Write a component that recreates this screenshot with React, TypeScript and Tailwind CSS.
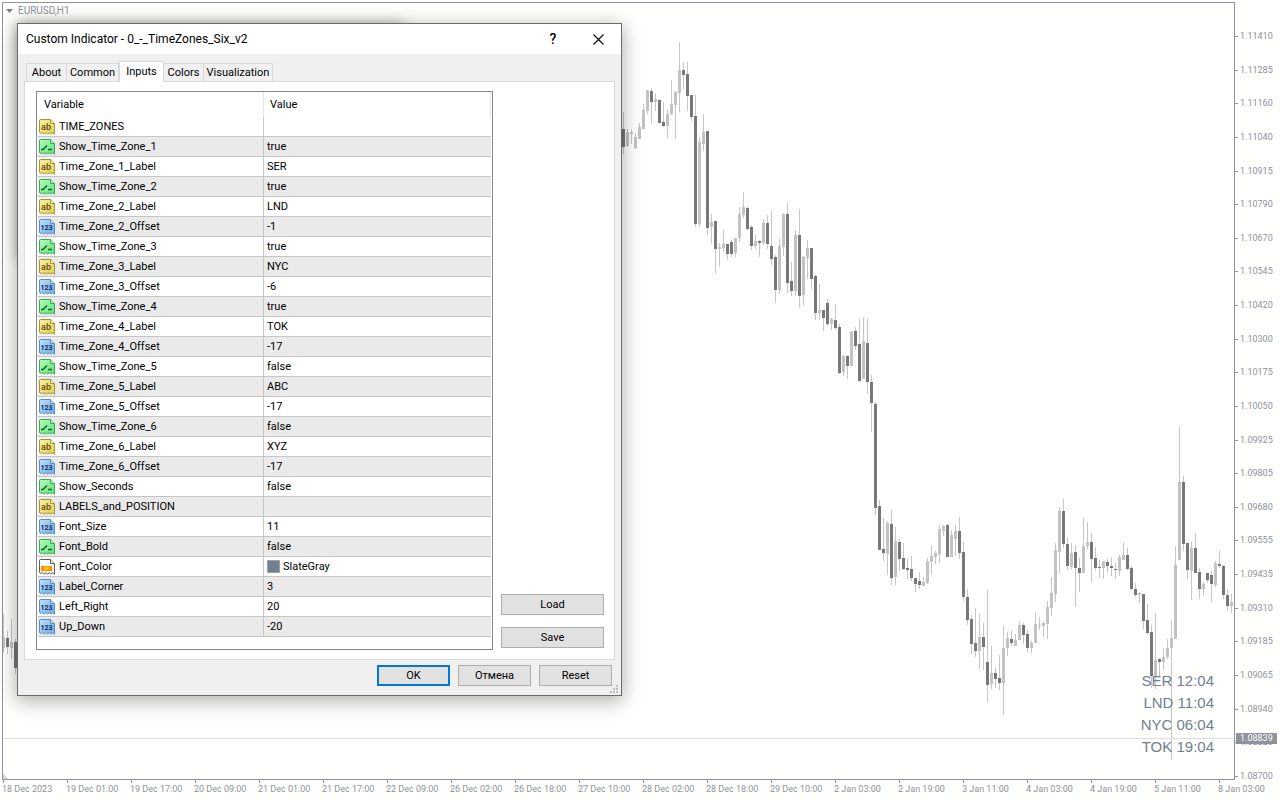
import React from "react";
import { twMerge } from "tailwind-merge";

type Kind = "text" | "bool" | "int" | "color";

const inputs: [Kind, string, string][] = [
  ["text", "TIME_ZONES", ""],
  ["bool", "Show_Time_Zone_1", "true"],
  ["text", "Time_Zone_1_Label", "SER"],
  ["bool", "Show_Time_Zone_2", "true"],
  ["text", "Time_Zone_2_Label", "LND"],
  ["int", "Time_Zone_2_Offset", "-1"],
  ["bool", "Show_Time_Zone_3", "true"],
  ["text", "Time_Zone_3_Label", "NYC"],
  ["int", "Time_Zone_3_Offset", "-6"],
  ["bool", "Show_Time_Zone_4", "true"],
  ["text", "Time_Zone_4_Label", "TOK"],
  ["int", "Time_Zone_4_Offset", "-17"],
  ["bool", "Show_Time_Zone_5", "false"],
  ["text", "Time_Zone_5_Label", "ABC"],
  ["int", "Time_Zone_5_Offset", "-17"],
  ["bool", "Show_Time_Zone_6", "false"],
  ["text", "Time_Zone_6_Label", "XYZ"],
  ["int", "Time_Zone_6_Offset", "-17"],
  ["bool", "Show_Seconds", "false"],
  ["text", "LABELS_and_POSITION", ""],
  ["int", "Font_Size", "11"],
  ["bool", "Font_Bold", "false"],
  ["color", "Font_Color", "SlateGray"],
  ["int", "Label_Corner", "3"],
  ["int", "Left_Right", "20"],
  ["int", "Up_Down", "-20"],
];

const prices = [
  "1.11410", "1.11285", "1.11160", "1.11040", "1.10915", "1.10790", "1.10670", "1.10545",
  "1.10420", "1.10300", "1.10175", "1.10050", "1.09925", "1.09805", "1.09680", "1.09555",
  "1.09435", "1.09310", "1.09185", "1.09065", "1.08940", "1.08820", "1.08700",
];

const times = [
  "18 Dec 2023", "19 Dec 01:00", "19 Dec 17:00", "20 Dec 09:00", "21 Dec 01:00",
  "21 Dec 17:00", "22 Dec 09:00", "26 Dec 02:00", "26 Dec 18:00", "27 Dec 10:00",
  "28 Dec 02:00", "28 Dec 18:00", "29 Dec 10:00", "2 Jan 03:00", "2 Jan 19:00",
  "3 Jan 11:00", "4 Jan 03:00", "4 Jan 19:00", "5 Jan 11:00", "8 Jan 03:00",
];

const clocks = ["SER 12:04", "LND 11:04", "NYC 06:04", "TOK 19:04"];

// high, body top, body bottom, low, 1 = bearish
type Candle = [number, number, number, number, 0 | 1];

const firstCandles: Candle[] = [
  [614, 637, 648, 653, 0], [631, 638, 647, 654, 1], [619, 642, 648, 659, 0], [639, 642, 668, 674, 1],
];

const candles: Candle[] = [
  [112, 129, 147, 154, 1], [129, 132, 146, 147, 0], [129, 132, 134, 144, 0], [133, 137, 148, 149, 0],
  [123, 127, 139, 139, 0], [104, 110, 129, 129, 0], [90, 90, 111, 114, 0], [88, 91, 102, 124, 1],
  [93, 99, 102, 111, 0], [99, 100, 123, 123, 1], [102, 122, 126, 127, 1], [109, 114, 126, 138, 0],
  [80, 104, 114, 115, 0], [91, 92, 105, 139, 0], [42, 70, 93, 112, 0], [62, 70, 75, 89, 1],
  [62, 74, 96, 111, 1], [95, 95, 117, 121, 1], [95, 116, 224, 227, 1], [137, 142, 224, 227, 0],
  [114, 132, 144, 151, 0], [131, 131, 228, 235, 1], [214, 222, 227, 244, 0], [221, 221, 249, 273, 1],
  [243, 247, 249, 267, 0], [230, 244, 248, 252, 0], [244, 244, 254, 260, 1], [240, 242, 254, 257, 1],
  [238, 238, 253, 257, 0], [207, 214, 238, 242, 0], [192, 207, 215, 218, 0], [206, 208, 229, 230, 1],
  [225, 227, 246, 250, 1], [235, 241, 246, 249, 0], [240, 241, 243, 257, 1], [219, 223, 243, 245, 0],
  [215, 223, 244, 249, 1], [211, 246, 259, 265, 1], [255, 257, 290, 303, 1], [239, 246, 290, 294, 0],
  [213, 214, 247, 256, 0], [203, 214, 283, 293, 1], [262, 281, 291, 296, 1], [230, 235, 291, 296, 0],
  [209, 235, 296, 308, 1], [256, 257, 295, 305, 0], [240, 248, 258, 279, 0], [248, 248, 279, 289, 1],
  [275, 276, 313, 320, 1], [284, 310, 313, 319, 0], [310, 310, 318, 331, 1], [299, 303, 324, 326, 1],
  [318, 319, 324, 330, 0], [304, 320, 328, 330, 1], [324, 327, 373, 374, 1], [355, 356, 372, 376, 0],
  [355, 356, 366, 379, 1], [331, 332, 366, 366, 0], [327, 331, 346, 350, 1], [319, 344, 381, 382, 1],
  [317, 341, 379, 379, 0], [319, 343, 382, 394, 1], [375, 382, 403, 432, 1], [402, 404, 508, 515, 1],
  [500, 506, 550, 550, 1], [518, 549, 553, 561, 1], [521, 523, 554, 575, 0], [510, 524, 578, 585, 1],
  [527, 541, 577, 585, 0], [539, 542, 559, 571, 1], [543, 558, 569, 570, 1], [559, 568, 570, 579, 1],
  [556, 569, 578, 581, 1], [578, 578, 584, 592, 1], [572, 581, 585, 589, 1], [577, 582, 586, 586, 0],
  [558, 561, 583, 584, 0], [546, 556, 562, 574, 0], [551, 553, 557, 564, 0], [525, 529, 554, 563, 0],
  [525, 526, 531, 536, 0], [524, 525, 557, 557, 1], [530, 535, 557, 557, 0], [525, 531, 539, 556, 0],
  [517, 531, 553, 559, 1], [542, 552, 597, 601, 1], [589, 597, 620, 625, 1], [615, 619, 644, 654, 1],
  [608, 643, 651, 657, 1], [614, 637, 651, 669, 0], [623, 637, 647, 670, 1], [590, 662, 685, 702, 1],
  [646, 673, 684, 689, 0], [668, 673, 679, 688, 1], [655, 678, 683, 690, 1], [626, 648, 683, 715, 0],
  [632, 638, 648, 656, 0], [631, 639, 643, 646, 1], [634, 640, 646, 646, 0], [621, 625, 640, 640, 0],
  [623, 625, 635, 644, 1], [630, 634, 648, 652, 1], [641, 643, 648, 653, 0], [612, 624, 643, 643, 0],
  [617, 625, 626, 630, 0], [622, 623, 626, 637, 0], [601, 607, 624, 639, 0], [577, 593, 608, 616, 0],
  [543, 550, 594, 602, 0], [507, 511, 552, 573, 0], [499, 511, 544, 548, 1], [538, 544, 566, 570, 1],
  [543, 553, 567, 569, 0], [545, 552, 568, 607, 1], [558, 568, 573, 592, 1], [518, 546, 573, 573, 0],
  [522, 542, 546, 549, 0], [533, 542, 559, 582, 1], [547, 558, 568, 571, 1], [560, 567, 568, 578, 1],
  [561, 561, 568, 579, 0], [559, 562, 566, 572, 1], [557, 566, 568, 576, 1], [563, 569, 570, 579, 1],
  [555, 557, 571, 576, 0], [543, 555, 560, 560, 0], [548, 555, 569, 570, 1], [566, 568, 589, 590, 1],
  [583, 589, 595, 597, 1], [592, 593, 595, 603, 0], [594, 594, 621, 629, 1], [604, 620, 633, 635, 1],
  [625, 632, 676, 688, 1], [613, 660, 677, 689, 0], [658, 659, 662, 677, 1], [648, 657, 662, 670, 0],
  [639, 648, 657, 659, 0], [620, 638, 648, 760, 0], [546, 565, 639, 639, 0], [427, 482, 560, 560, 0],
  [476, 482, 544, 551, 1], [543, 543, 570, 579, 1], [542, 548, 571, 600, 0], [533, 548, 573, 573, 1],
  [568, 572, 589, 599, 1], [582, 584, 589, 596, 0], [573, 573, 580, 583, 1], [571, 575, 584, 602, 1],
  [561, 563, 585, 587, 0], [551, 564, 566, 568, 1], [565, 566, 595, 599, 1], [589, 595, 606, 611, 1],
  [594, 602, 606, 613, 0],
];

const Candles: React.FC<{ data: Candle[]; start: number }> = ({ data, start }) => (
  <>
    {data.map(([high, top, bottom, low, bear], index) => (
      <g key={index}>
        <rect x={start + index * 4 + 1} y={high} width={1} height={low - high} fill="#c6c6c6" />
        <rect
          x={start + index * 4}
          y={top}
          width={3}
          height={bottom - top}
          fill={bear ? "#787878" : "#c3c3c3"}
        />
      </g>
    ))}
  </>
);

const palette = {
  text: { from: "#fbf3a6", to: "#e3cd55", line: "#a8943a", ink: "#5c4a00" },
  bool: { from: "#b5fbb9", to: "#5fe07a", line: "#3fa95a", ink: "#0b6420" },
  int: { from: "#bfe0fb", to: "#6fa9e3", line: "#5a8fc4", ink: "#0c2f66" },
  color: { from: "#ffffff", to: "#f1f1f1", line: "#5f5f5f", ink: "#ff8a00" },
};

const KindIcon: React.FC<{ kind: Kind; id: string }> = ({ kind, id }) => {
  const { from, to, line, ink } = palette[kind];

  return (
    <svg width="16" height="16" viewBox="0 0 16 16" className="shrink-0">
      <defs>
        <linearGradient id={id} x1="0" y1="0" x2="1" y2="1">
          <stop offset="0" stopColor={from} />
          <stop offset="1" stopColor={to} />
        </linearGradient>
        <linearGradient id={`${id}-bar`}>
          <stop offset="0" stopColor="#ff7a00" />
          <stop offset="0.5" stopColor="#ffe600" />
          <stop offset="1" stopColor="#ff7a00" />
        </linearGradient>
      </defs>
      <path
        d="M.5 1.5Q.5.5 1.5.5H11.5L15.5 4.5V15.3L13.5 13.5 12 15.3 10.3 13.5 8.7 15.3 7 13.5 5.4 15.3 3.8 13.5 2.2 14.5.5 13.5Z"
        fill={`url(#${id})`}
        stroke={line}
      />
      <path d="M11.5.5V4.5H15.5" fill={from} stroke={line} />
      {kind === "text" && (
        <text x="7" y="11" textAnchor="middle" fontSize="9" fontWeight="500" fill={ink}>
          ab
        </text>
      )}
      {kind === "int" && (
        <text x="7.5" y="11" textAnchor="middle" fontSize="7" fontWeight="700" fill={ink}>
          123
        </text>
      )}
      {kind === "bool" && (
        <path d="M2 10.5H4L8 6.5M9 10.5H13" fill="none" stroke={ink} strokeWidth="1.4" />
      )}
      {kind === "color" && (
        <rect x="2.5" y="7.5" width="10" height="4" fill={`url(#${id}-bar)`} stroke={ink} />
      )}
    </svg>
  );
};

const tabs = ["About", "Common", "Inputs", "Colors", "Visualization"];

const Tabs: React.FC = () => (
  <div role="tablist" className="flex items-end h-[21px] pl-0.5">
    {tabs.map((tab, index) => {
      const active = tab === "Inputs";
      return (
        <button
          key={tab}
          role="tab"
          aria-selected={active}
          className={twMerge(
            "h-[18px] border border-b-0 border-[#d9d9d9] bg-[#f0f0f0] whitespace-nowrap leading-4",
            index > 0 && "border-l-0",
            index === 0 && "w-[41px]",
            tab === "Common" && "w-[52px]",
            tab === "Colors" && "w-10",
            tab === "Visualization" && "w-[69px]",
            active && "w-[45px] h-[21px] -mb-px bg-white border-l relative z-10"
          )}
        >
          {tab}
        </button>
      );
    })}
  </div>
);

const Button: React.FC<{ className?: string; children: React.ReactNode }> = ({
  className,
  children,
}) => (
  <button
    className={twMerge(
      "h-[21px] w-[73px] flex items-center justify-center border border-[#adadad] bg-[#e1e1e1]",
      className
    )}
  >
    {children}
  </button>
);

const InputsTable: React.FC = () => (
  <div className="flex-1 border border-[#828790] bg-white px-px pb-3">
    <table className="w-full table-fixed border-separate border-spacing-0">
      <thead>
        <tr className="h-[25px] text-left">
          <th className="w-[226px] p-0 pl-1.5 font-normal border-r border-[#e5e5e5]">Variable</th>
          <th className="p-0 pl-1.5 font-normal border-r border-[#e5e5e5]">Value</th>
        </tr>
      </thead>
      <tbody>
        {inputs.map(([kind, name, value]) => (
          <tr key={name} className="h-5 even:bg-[#eaeaea]">
            <td className="p-0 pl-px border-r border-b border-[#c5c5c5]">
              <div className="flex items-center gap-1 h-[19px]">
                <KindIcon kind={kind} id={name} />
                {name}
              </div>
            </td>
            <td className="p-0 pl-[3px] border-b border-[#c5c5c5]">
              <div className="flex items-center gap-[3px] h-[19px]">
                {kind === "color" && (
                  <span className="size-[13px] bg-[#708090] border border-[#a0a0a0]" />
                )}
                {value}
              </div>
            </td>
          </tr>
        ))}
      </tbody>
    </table>
  </div>
);

const SettingsDialog: React.FC = () => (
  <div className="absolute left-[17px] top-[23px] w-[605px]">
    <div className="absolute left-0 top-0 h-[236px] w-[387px] shadow-[0_0_12px_0_rgba(0,0,0,0.3)]" />
    <div
      role="dialog"
      aria-label="Custom Indicator"
      className="relative border border-[#6b6b6b] bg-[#f0f0f0] text-black shadow-[0_4px_18px_1px_rgba(0,0,0,0.32)] text-[11px] leading-[13px]"
    >
      <div className="flex items-center h-[30px] bg-white pl-2 pr-[17px] text-[12px]">
        <h1 className="flex-1">Custom Indicator - 0_-_TimeZones_Six_v2</h1>
        <button aria-label="Help" className="w-3 text-[14px] font-medium">?</button>
        <button aria-label="Close" className="ml-[34px]">
          <svg width="11" height="11" viewBox="0 0 11 11" stroke="#000" strokeWidth="1.1">
            <path d="M.5.5 10.5 10.5M10.5.5.5 10.5" />
          </svg>
        </button>
      </div>
      <div className="px-1.5 pt-1.5">
        <Tabs />
        <div className="flex gap-2 border border-[#d9d9d9] bg-white pl-[11px] pr-2.5 py-[9px]">
          <InputsTable />
          <div className="flex flex-col justify-end gap-3 pb-0.5">
            <Button className="w-[103px]">Load</Button>
            <Button className="w-[103px]">Save</Button>
          </div>
        </div>
      </div>
      <div className="flex justify-end gap-2 pt-[5px] pb-[9px] pr-[9px]">
        <Button className="border-2 border-[#0078d7]">OK</Button>
        <Button>Отмена</Button>
        <Button>Reset</Button>
      </div>
      <svg width="8" height="8" viewBox="0 0 8 8" fill="#bfbfbf" className="absolute right-[3px] bottom-0.5">
        <path d="M6 0h2v2h-2zM3 3h2v2h-2zM6 3h2v2h-2zM0 6h2v2h-2zM3 6h2v2h-2zM6 6h2v2h-2z" />
      </svg>
    </div>
  </div>
);

const PriceAxis: React.FC = () => (
  <div className="relative w-[45px] shrink-0 flex flex-col justify-between pt-7 pb-[17px] text-[9px] leading-[13px]">
    {prices.map((price) => (
      <div key={price} className="flex items-center gap-0.5 h-[13px]">
        <span className="w-[3px] h-px bg-[#8f929c]" />
        {price}
      </div>
    ))}
    <div className="absolute left-px right-[3px] top-[731px] h-[11px] pl-1 bg-[#8f929c] text-white leading-[11px]">
      1.08839
    </div>
  </div>
);

export default function App() {
  return (
    <main className="relative flex min-h-screen overflow-hidden bg-[#fffffe] pl-0.5 pt-0.5 font-['Roboto','Liberation_Sans',sans-serif] text-[#8f929c]">
      <div className="flex-1 min-w-0 flex flex-col">
        <section className="relative flex-1 border border-[#8f929c]">
          <svg
            viewBox="3 3 1231 776"
            preserveAspectRatio="none"
            shapeRendering="crispEdges"
            className="absolute inset-0 w-full h-full"
          >
            <Candles data={firstCandles} start={2} />
            <Candles data={candles} start={622} />
            <rect x="3" y="738" width="1231" height="1" fill="#dcdedf" />
            <path d="M3 774 8 779H3Z" fill="#d5d5d5" />
          </svg>
          <div className="relative flex items-center gap-[5px] pl-[3px] pt-px text-[10px] leading-[13px]">
            <svg width="7" height="4" viewBox="0 0 7 4" fill="#7b7e88">
              <path d="M0 0H7L3.5 4Z" />
            </svg>
            EURUSD,H1
          </div>
          <ul className="absolute right-5 bottom-[21px] text-right font-['Liberation_Sans',sans-serif] text-[15px] leading-[22px] text-[#708090]">
            {clocks.map((clock) => (
              <li key={clock}>{clock}</li>
            ))}
          </ul>
        </section>
        <div className="flex h-5 text-[9px] leading-[13px]">
          {times.map((time) => (
            <div key={time} className="w-16 shrink-0 whitespace-nowrap">
              <div className="ml-px w-px h-[3px] bg-[#8f929c]" />
              {time}
            </div>
          ))}
        </div>
      </div>
      <PriceAxis />
      <SettingsDialog />
    </main>
  );
}
